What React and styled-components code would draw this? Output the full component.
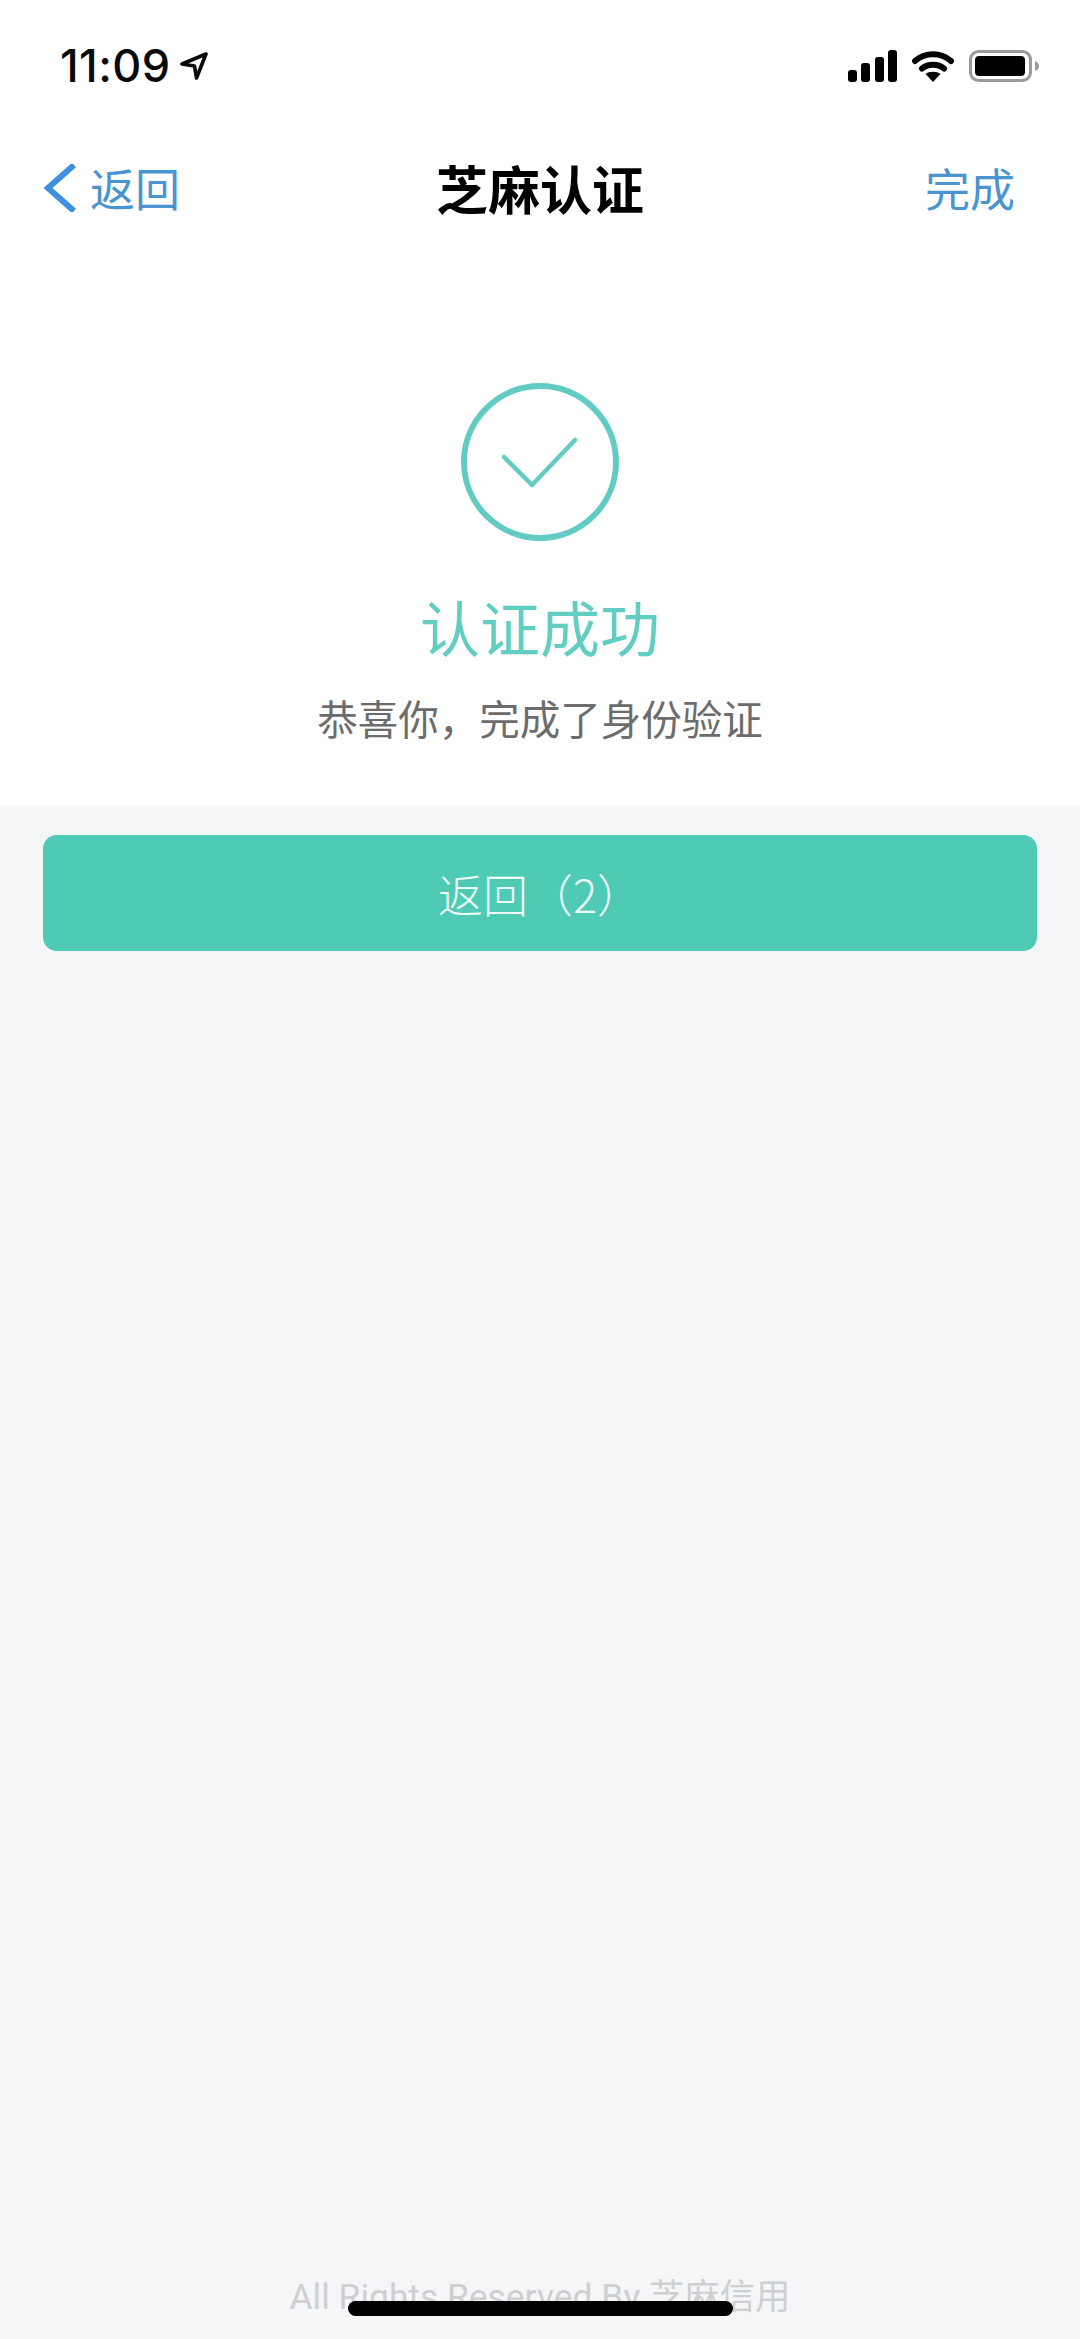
import React from 'react';
import styled, { createGlobalStyle } from 'styled-components';

const GlobalStyle = createGlobalStyle`
  html, body {
    margin: 0;
    padding: 0;
    background: #f5f6f8;
  }
  * { box-sizing: border-box; }
`;

const cjk = `"Noto Sans CJK SC", "Noto Sans", sans-serif`;

const Page = styled.div`
  position: relative;
  width: 1080px;
  height: 2339px;
  overflow: hidden;
  display: flex;
  flex-direction: column;
  background: #f5f6f8;
  font-family: ${cjk};
`;

const WhitePanel = styled.div`
  height: 806px;
  background: #ffffff;
  display: flex;
  flex-direction: column;
`;

const StatusBar = styled.div`
  height: 132px;
  padding: 50px 40px 0 60px;
  display: flex;
  justify-content: space-between;
  align-items: flex-start;
`;

const TimeGroup = styled.div`
  display: flex;
  align-items: center;
  height: 32px;
  gap: 10px;
`;

const Time = styled.span`
  font-family: Inter, "Liberation Sans", sans-serif;
  font-size: 45px;
  font-weight: 500;
  line-height: 32px;
  letter-spacing: 0.4px;
  color: #0a0a0a;
`;

const StatusIcons = styled.div`
  display: flex;
  align-items: center;
  height: 32px;
  gap: 15px;
`;

const NavBar = styled.div`
  height: 112px;
  padding: 0 65px 0 43px;
  display: flex;
  align-items: center;
  justify-content: space-between;
  position: relative;
`;

const BackLink = styled.div`
  display: flex;
  align-items: center;
  gap: 13px;
`;

const NavAction = styled.span`
  font-size: 45px;
  line-height: 60px;
  color: #4a94d0;
`;

const NavTitle = styled.span`
  position: absolute;
  left: 0;
  right: 0;
  text-align: center;
  font-size: 52px;
  font-weight: 700;
  line-height: 60px;
  color: #000000;
`;

const Hero = styled.div`
  flex: 1;
  display: flex;
  flex-direction: column;
  align-items: center;
  padding-top: 139px;
`;

const ResultTitle = styled.div`
  margin-top: 45px;
  font-size: 60px;
  line-height: 80px;
  color: #62cdc1;
`;

const ResultText = styled.div`
  margin-top: 22px;
  font-size: 40.5px;
  line-height: 60px;
  color: #6c6c6c;
`;

const Content = styled.div`
  flex: 1;
  display: flex;
  flex-direction: column;
  padding: 29px 43px 22px;
`;

const ReturnButton = styled.div`
  height: 116px;
  border-radius: 14px;
  background: #4fcab5;
  display: flex;
  align-items: center;
  justify-content: center;
  font-size: 45px;
  font-weight: 300;
  color: #eefcf9;
`;

const Footer = styled.div`
  margin-top: auto;
  text-align: center;
  font-size: 35.4px;
  line-height: 40px;
  color: #cfcfd1;
  font-family: Roboto, ${cjk};
`;

const HomeIndicator = styled.div`
  position: absolute;
  left: 348px;
  top: 2301px;
  width: 385px;
  height: 15px;
  border-radius: 8px;
  background: #000000;
`;

const LocationArrow = () => (
  <svg width="28" height="28" viewBox="0 0 28 28" fill="none">
    <path d="M26 2 L2 12 L14.5 14 L16.5 26 Z" stroke="#0a0a0a" strokeWidth="3.6" strokeLinejoin="round" />
  </svg>
);

const SignalIcon = () => (
  <svg width="49" height="32" viewBox="0 0 49 32" fill="#000">
    <rect x="0" y="20" width="9" height="12" rx="3" />
    <rect x="13" y="13" width="9" height="19" rx="3" />
    <rect x="27" y="7" width="9" height="25" rx="3" />
    <rect x="40" y="0" width="9" height="32" rx="3" />
  </svg>
);

const WifiIcon = () => (
  <svg width="42" height="32" viewBox="0 0 42 32" fill="none">
    <path d="M3 11 C13 2 29 2 39 11" stroke="#000" strokeWidth="6" strokeLinecap="round" />
    <path d="M10 18.5 C16 13.5 26 13.5 32 18.5" stroke="#000" strokeWidth="6" strokeLinecap="round" />
    <path d="M13.5 24 C17 21 25 21 28.5 24 L21 32 Z" fill="#000" />
  </svg>
);

const BatteryIcon = () => (
  <svg width="71" height="32" viewBox="0 0 71 32" fill="none">
    <rect x="1.5" y="1.5" width="60" height="29" rx="8" stroke="#9a9a9a" strokeWidth="3" />
    <rect x="6" y="6" width="50" height="20" rx="4" fill="#000" />
    <path d="M66 11 C69 12 70 14 70 16 C70 18 69 20 66 21 Z" fill="#9a9a9a" />
  </svg>
);

const BackChevron = () => (
  <svg width="34" height="48" viewBox="0 0 34 48" fill="none">
    <path d="M31 1 L5 24 L31 47" stroke="#3f90dc" strokeWidth="6" />
  </svg>
);

const SuccessMark = () => (
  <svg width="158" height="158" viewBox="0 0 158 158" fill="none">
    <circle cx="79" cy="79" r="76" stroke="#62cbc3" strokeWidth="6" />
    <path d="M43 74 L71 102 L114 57" stroke="#62cbc3" strokeWidth="4.5" strokeLinecap="round" strokeLinejoin="round" />
  </svg>
);

export default function App() {
  return (
    <Page>
      <GlobalStyle />
      <WhitePanel>
        <StatusBar>
          <TimeGroup>
            <Time>11:09</Time>
            <LocationArrow />
          </TimeGroup>
          <StatusIcons>
            <SignalIcon />
            <WifiIcon />
            <BatteryIcon />
          </StatusIcons>
        </StatusBar>
        <NavBar>
          <BackLink>
            <BackChevron />
            <NavAction>返回</NavAction>
          </BackLink>
          <NavTitle>芝麻认证</NavTitle>
          <NavAction>完成</NavAction>
        </NavBar>
        <Hero>
          <SuccessMark />
          <ResultTitle>认证成功</ResultTitle>
          <ResultText>恭喜你，完成了身份验证</ResultText>
        </Hero>
      </WhitePanel>
      <Content>
        <ReturnButton>返回（2）</ReturnButton>
        <Footer>All Rights Reserved By 芝麻信用</Footer>
      </Content>
      <HomeIndicator />
    </Page>
  );
}
